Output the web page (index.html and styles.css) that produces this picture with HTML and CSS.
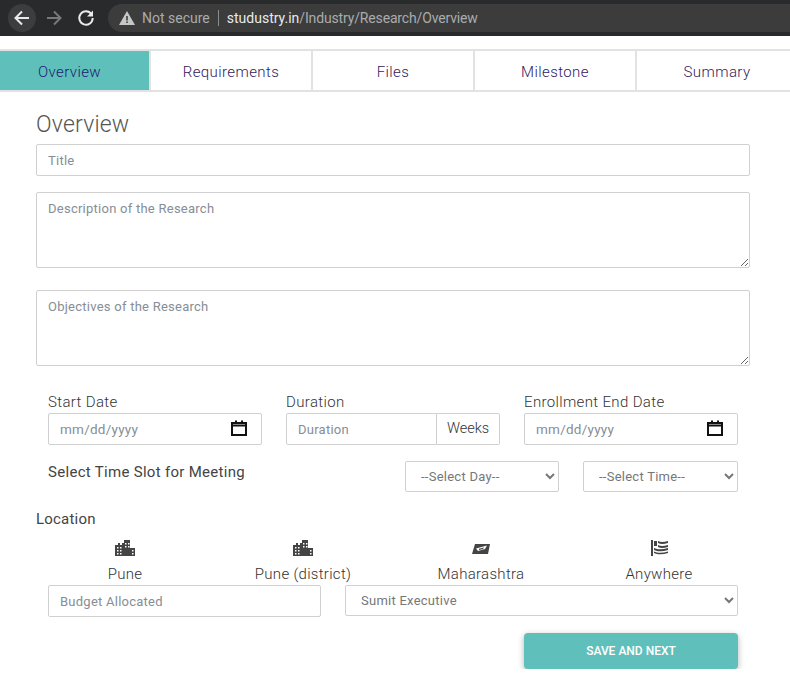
FILE: index.html
```html
<!DOCTYPE html>
<html>
	<head>
		<meta charset="UTF-8">
		<title>Overview</title>
		<link rel="stylesheet" href="styles.css">
	</head>
	<body>
		<div class="chrome">
			<div class="nav-btn nav-back">
				<svg width="18" height="18" viewBox="0 0 18 18"><path d="M16 9H3M9 2.5L2.5 9 9 15.5" fill="none" stroke="#e8eaed" stroke-width="2"/></svg>
			</div>
			<div class="nav-btn">
				<svg width="18" height="18" viewBox="0 0 18 18"><path d="M2 9h13M9 2.5L15.5 9 9 15.5" fill="none" stroke="#77797b" stroke-width="2"/></svg>
			</div>
			<div class="nav-btn">
				<svg width="18" height="18" viewBox="0 0 18 18"><path d="M14.5 5.2A6.7 6.7 0 1 0 15.7 9" fill="none" stroke="#e8eaed" stroke-width="2"/><path d="M16 1.5V7.5H10Z" fill="#e8eaed"/></svg>
			</div>
			<div class="omnibox">
				<svg class="warn" width="16" height="14" viewBox="0 0 16 14"><path d="M8 0L16 14H0Z" fill="#c4c7c5"/><path d="M7.2 5h1.6v4.5H7.2zM7.2 10.5h1.6V12H7.2z" fill="#3c3c3c"/></svg>
				<span class="not-secure">Not secure</span>
				<span class="divider"></span>
				<span class="host">studustry.in</span><span class="path">/Industry/Research/Overview</span>
			</div>
		</div>

		<ul class="tabs">
			<li class="tab active">Overview</li>
			<li class="tab">Requirements</li>
			<li class="tab">Files</li>
			<li class="tab">Milestone</li>
			<li class="tab">Summary</li>
		</ul>

		<div class="page">
			<h2 class="title">Overview</h2>
			<input class="field" type="text" placeholder="Title">
			<textarea class="field area" placeholder="Description of the Research"></textarea>
			<textarea class="field area" placeholder="Objectives of the Research"></textarea>

			<div class="inner">
				<div class="dates">
					<div class="col">
						<label>Start Date</label>
						<div class="field date"><span class="ph">mm/dd/yyyy</span>
							<svg width="16" height="16" viewBox="0 0 16 16"><path d="M1 3h14v12H1zM1 5.500h14" fill="none" stroke="#111" stroke-width="2"/><path d="M4 0.500h2v3H4zM10 0.500h2v3h-2z" fill="#111"/></svg>
						</div>
					</div>
					<div class="col">
						<label>Duration</label>
						<div class="group">
							<input class="field grow" type="text" placeholder="Duration">
							<span class="addon">Weeks</span>
						</div>
					</div>
					<div class="col">
						<label>Enrollment End Date</label>
						<div class="field date"><span class="ph">mm/dd/yyyy</span>
							<svg width="16" height="16" viewBox="0 0 16 16"><path d="M1 3h14v12H1zM1 5.500h14" fill="none" stroke="#111" stroke-width="2"/><path d="M4 0.500h2v3H4zM10 0.500h2v3h-2z" fill="#111"/></svg>
						</div>
					</div>
				</div>

				<div class="slot">
					<div class="slot-label">Select Time Slot for Meeting</div>
					<select class="field sel day"><option>--Select Day--</option></select>
					<select class="field sel time"><option>--Select Time--</option></select>
				</div>
			</div>

			<div class="loc-label">Location</div>
			<div class="locations">
				<div class="loc">
					<svg width="22" height="16" viewBox="0 0 22 16"><path class="bld" fill-rule="evenodd" d="M1 16V5h3V3h2v2h2V3h2v-3h6v8h5v8zM3 7v1.500h1.500V7zM6 7v1.500h1.500V7zM3 10v1.500h1.500V10zM6 10v1.500h1.500V10zM3 13v1.500h1.500V13zM6 13v1.500h1.500V13zM11 3v1.500h1.500V3zM14 3v1.500h1.500V3zM11 6v1.500h1.500V6zM14 6v1.500h1.500V6zM18 10v1.500h1.500V10zM18 13v1.500h1.500V13z"/></svg>
					<span>Pune</span>
				</div>
				<div class="loc">
					<svg width="22" height="16" viewBox="0 0 22 16"><path class="bld" fill-rule="evenodd" d="M1 16V5h3V3h2v2h2V3h2v-3h6v8h5v8zM3 7v1.500h1.500V7zM6 7v1.500h1.500V7zM3 10v1.500h1.500V10zM6 10v1.500h1.500V10zM3 13v1.500h1.500V13zM6 13v1.500h1.500V13zM11 3v1.500h1.500V3zM14 3v1.500h1.500V3zM11 6v1.500h1.500V6zM14 6v1.500h1.500V6zM18 10v1.500h1.500V10zM18 13v1.500h1.500V13z"/></svg>
					<span>Pune (district)</span>
				</div>
				<div class="loc">
					<svg width="18" height="16" viewBox="0 0 18 16"><path class="bld" d="M3 4h15l-2 10H0z"/><path d="M4 8.500L15 5.500 13 9 6 11z" fill="#fff"/><path class="bld" d="M7 8.800l5-1.400-1 1.700-4 1z"/></svg>
					<span>Maharashtra</span>
				</div>
				<div class="loc">
					<svg width="17" height="16" viewBox="0 0 17 16"><path class="bld" d="M0 0h2v16H0zM3 1h3v5H3zM7 1c3 1.500 6 1 10 0v2c-4 1-7 1.500-10 0zM7 5c3 1.500 6 1 10 0v2c-4 1-7 1.500-10 0zM3 8c4 2 9 1.500 14 0v2c-5 1.500-10 2-14 0zM3 11.500c4 2 9 1.500 14 0v1.500c-5 1.500-10 2-14 0z"/></svg>
					<span>Anywhere</span>
				</div>
			</div>

			<div class="inner budget">
				<input class="field bud" type="text" placeholder="Budget Allocated">
				<select class="field sel exec"><option>Sumit Executive</option></select>
			</div>

			<div class="inner actions">
				<button class="save">SAVE AND NEXT</button>
			</div>
		</div>
	</body>
</html>
```

FILE: styles.css
```css
* {
	margin: 0;
	padding: 0;
	box-sizing: border-box;
}

ul, li {
	list-style: none;
}

body {
	background: #fff;
	font-family: "Roboto", "Liberation Sans", sans-serif;
	color: #555;
	overflow: hidden;
}

/* browser bar */
.chrome {
	height: 36px;
	background: #292a2b;
	display: flex;
	align-items: center;
	padding-left: 8px;
}

.nav-btn {
	width: 28px;
	height: 28px;
	border-radius: 50%;
	display: flex;
	align-items: center;
	justify-content: center;
	margin-right: 4px;
}

.nav-back {
	background: #3c3d3e;
}

.omnibox {
	flex: 1;
	height: 28px;
	background: #3c3c3c;
	border-radius: 14px 0 0 14px;
	margin-left: 4px;
	display: flex;
	align-items: center;
	padding-left: 11px;
	font-size: 14px;
	white-space: nowrap;
}

.warn {
	margin-right: 7px;
}

.not-secure {
	color: #a9acae;
}

.divider {
	width: 1px;
	height: 16px;
	background: #8a8c8e;
	margin: 0 8px;
}

.host {
	color: #e8eaed;
}

.path {
	color: #a9acae;
	letter-spacing: -0.15px;
}

/* tabs */
.tabs {
	display: flex;
	margin-top: 13px;
	height: 43px;
	border-top: 2px solid #e2e2e2;
	border-bottom: 2px solid #e2e2e2;
}

.tab {
	flex: none;
	width: 162px;
	padding-top: 2px;
	border-right: 2px solid #e2e2e2;
	display: flex;
	align-items: center;
	justify-content: center;
	font-size: 15px;
	font-weight: 300;
	letter-spacing: 0.4px;
	color: #2f1a5e;
}

.tab:first-child {
	width: 151px;
	padding-right: 10px;
}

.tab:last-child {
	border-right: none;
	padding-right: 2px;
}

.tab.active {
	background: #5fc0bb;
	color: #1c1a70;
}

/* form */
.page {
	padding: 19px 40px 0 36px;
}

.title {
	font-size: 23px;
	font-weight: 300;
	line-height: 28px;
	letter-spacing: 0.2px;
	color: #555;
	margin-bottom: 5px;
}

.field {
	display: block;
	width: 100%;
	height: 32px;
	border: 1px solid #d0d0d0;
	border-radius: 2px;
	background: #fff;
	font-family: inherit;
	font-size: 13px;
	letter-spacing: 0.25px;
	padding: 0 11px;
	color: #777;
	outline: none;
}

.field::placeholder {
	color: #868e96;
	opacity: 1;
}

.area {
	height: 76px;
	padding-top: 8px;
	margin-top: 16px;
	margin-bottom: 22px;
}

.area:last-of-type {
	margin-top: 0;
	margin-bottom: 0;
}

.inner {
	padding: 0 12px;
}

.dates {
	display: flex;
	gap: 24px;
	margin-top: 25px;
}

.col {
	width: 214px;
}

.col label {
	display: block;
	font-size: 15px;
	font-weight: 300;
	color: #333;
	line-height: 22px;
	letter-spacing: 0.35px;
}

.date {
	display: flex;
	align-items: center;
	justify-content: space-between;
	padding-right: 14px;
	font-size: 13.500px;
}

.date svg {
	margin-bottom: 2px;
}

.ph {
	color: #868e96;
}

.group {
	display: flex;
}

.grow {
	flex: 1;
	width: auto;
	min-width: 0;
	border-radius: 2px 0 0 2px;
}

.addon {
	width: 63px;
	height: 32px;
	border: 1px solid #d0d0d0;
	border-left: none;
	border-radius: 0 2px 2px 0;
	font-size: 14.500px;
	font-weight: 300;
	color: #333;
	line-height: 29px;
	text-align: center;
}

.slot {
	display: flex;
	align-items: flex-start;
	margin-top: 16px;
}

.slot-label {
	width: 357px;
	font-size: 15px;
	color: #444;
	letter-spacing: 0.3px;
	line-height: 22px;
}

.sel {
	height: 31px;
	padding-left: 11px;
}

.day {
	width: 154px;
	margin-right: 24px;
}

.time {
	width: 155px;
}

.loc-label {
	font-size: 15px;
	color: #444;
	letter-spacing: 0.2px;
	line-height: 20px;
	margin-top: 17px;
}

.locations {
	display: grid;
	grid-template-columns: repeat(4, 178px);
	margin-top: 11px;
}

.loc {
	display: flex;
	flex-direction: column;
	align-items: center;
	font-size: 15px;
	font-weight: 300;
	color: #333;
	letter-spacing: 0.3px;
}

.loc svg {
	height: 16px;
}

.loc span {
	line-height: 20px;
	margin-top: 8px;
}

.bld {
	fill: #444;
}

.budget {
	display: flex;
	gap: 24px;
	margin-top: 1px;
}

.bud {
	width: 273px;
}

.exec {
	flex: 1;
	width: auto;
}

.actions {
	display: flex;
	justify-content: flex-end;
	margin-top: 16px;
}

.save {
	width: 214px;
	height: 36px;
	border: none;
	border-radius: 4px;
	background: #5fc0bb;
	color: #fff;
	font-family: inherit;
	font-size: 12px;
	font-weight: 500;
	box-shadow: 0 2px 6px rgba(0, 0, 0, 0.3);
}
```
